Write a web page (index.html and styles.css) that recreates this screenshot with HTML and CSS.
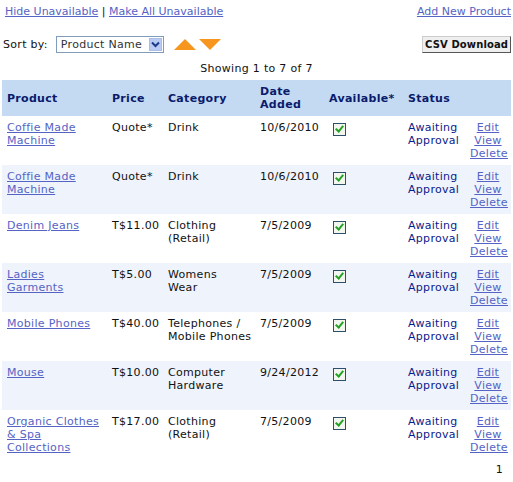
FILE: index.html
```html
<!DOCTYPE html>
<html>
<head>
<meta charset="utf-8">
<link rel="stylesheet" href="styles.css">
</head>
<body>
<div class="page">
  <div class="toplinks">
    <div><a href="#">Hide Unavailable</a> | <a href="#">Make All Unavailable</a></div>
    <a href="#">Add New Product</a>
  </div>
  <div class="sortbar">
    <div class="sortleft">
      <span class="sortlabel">Sort by:</span>
      <span class="selectwrap">
        <select class="sortselect"><option>Product Name</option></select>
        <span class="selbtn"><svg width="9" height="7" viewBox="0 0 9 7"><path d="M1 1.5 L4.5 5 L8 1.5" fill="none" stroke="#1d3a8a" stroke-width="2"/></svg></span>
      </span>
      <svg class="arrow" width="22" height="11" viewBox="0 0 22 11"><polygon points="0,11 11,0 22,11" fill="#f7961f"/></svg>
      <svg class="arrow" width="22" height="11" viewBox="0 0 22 11"><polygon points="0,0 22,0 11,11" fill="#f7961f"/></svg>
    </div>
    <button class="csv">CSV Download</button>
  </div>
  <div class="showing">Showing 1 to 7 of 7</div>
  <table class="grid">
    <colgroup>
      <col class="c-prod"><col class="c-price"><col class="c-cat"><col class="c-date"><col class="c-avail"><col class="c-status"><col>
    </colgroup>
    <thead>
      <tr><th>Product</th><th>Price</th><th>Category</th><th>Date<br>Added</th><th>Available*</th><th>Status</th><th></th></tr>
    </thead>
    <tbody>
      <tr><td><a href="#">Coffie Made Machine</a></td><td>Quote*</td><td class="cat">Drink</td><td>10/6/2010</td><td><span class="chk"></span></td><td class="status">Awaiting Approval</td><td class="acts"><a href="#">Edit</a><br><a href="#">View</a><br><a href="#">Delete</a></td></tr>
      <tr class="alt"><td><a href="#">Coffie Made Machine</a></td><td>Quote*</td><td class="cat">Drink</td><td>10/6/2010</td><td><span class="chk"></span></td><td class="status">Awaiting Approval</td><td class="acts"><a href="#">Edit</a><br><a href="#">View</a><br><a href="#">Delete</a></td></tr>
      <tr><td><a href="#">Denim Jeans</a></td><td>T$11.00</td><td class="cat">Clothing (Retail)</td><td>7/5/2009</td><td><span class="chk"></span></td><td class="status">Awaiting Approval</td><td class="acts"><a href="#">Edit</a><br><a href="#">View</a><br><a href="#">Delete</a></td></tr>
      <tr class="alt"><td><a href="#">Ladies Garments</a></td><td>T$5.00</td><td class="cat">Womens<br>Wear</td><td>7/5/2009</td><td><span class="chk"></span></td><td class="status">Awaiting Approval</td><td class="acts"><a href="#">Edit</a><br><a href="#">View</a><br><a href="#">Delete</a></td></tr>
      <tr><td><a href="#">Mobile Phones</a></td><td>T$40.00</td><td class="cat">Telephones / Mobile Phones</td><td>7/5/2009</td><td><span class="chk"></span></td><td class="status">Awaiting Approval</td><td class="acts"><a href="#">Edit</a><br><a href="#">View</a><br><a href="#">Delete</a></td></tr>
      <tr class="alt"><td><a href="#">Mouse</a></td><td>T$10.00</td><td class="cat">Computer Hardware</td><td>9/24/2012</td><td><span class="chk"></span></td><td class="status">Awaiting Approval</td><td class="acts"><a href="#">Edit</a><br><a href="#">View</a><br><a href="#">Delete</a></td></tr>
      <tr><td><a href="#">Organic Clothes &amp; Spa Collections</a></td><td>T$17.00</td><td class="cat">Clothing (Retail)</td><td>7/5/2009</td><td><span class="chk"></span></td><td class="status">Awaiting Approval</td><td class="acts"><a href="#">Edit</a><br><a href="#">View</a><br><a href="#">Delete</a></td></tr>
    </tbody>
  </table>
  <div class="pager">1</div>
</div>
</body>
</html>
```
FILE: styles.css
```css
html, body { margin: 0; padding: 0; background: #fff; }
body { font-family: "DejaVu Sans", Verdana, sans-serif; font-size: 11px; color: #111; line-height: 13px; letter-spacing: 0.3px; }
a { color: #5563c4; text-decoration: underline; }
.page { padding: 5px 2px 0 2px; }
.toplinks { display: flex; justify-content: space-between; padding: 0 0 0 3px; height: 14px; letter-spacing: 0; }
.sortbar { display: flex; justify-content: space-between; align-items: center; margin-top: 17px; padding-left: 1px; }
.sortleft { display: flex; align-items: center; }
.sortlabel { margin-right: 8px; }
.selectwrap { position: relative; display: inline-block; margin-right: 10px; }
.sortselect { appearance: none; -webkit-appearance: none; font-family: inherit; font-size: 11px; letter-spacing: 0.3px; color: #333; border: 1px solid #7f9db9; background: #fff; width: 108px; height: 17px; padding: 0 0 0 4px; margin: 0; border-radius: 0; line-height: 15px; }
.selbtn { position: absolute; top: 2px; right: 2px; width: 13px; height: 13px; background: #b9cbf3; border: 1px solid #a9bde8; box-sizing: border-box; display: flex; align-items: center; justify-content: center; }
.arrow { margin-right: 3px; }
.csv { font-family: inherit; font-size: 10px; font-weight: bold; letter-spacing: 0.1px; background: #efefef; border: 1px solid #555; border-color: #ccc #555 #555 #ccc; padding: 0 2px; height: 17px; color: #111; border-radius: 0; }
.showing { text-align: center; margin-top: 9px; height: 14px; }
.grid { width: 509px; border-collapse: collapse; table-layout: fixed; margin-top: 4px; }
.c-prod { width: 105px; } .c-price { width: 56px; } .c-cat { width: 92px; } .c-date { width: 69px; } .c-avail { width: 79px; } .c-status { width: 62px; }
.grid th { background: #c3daf2; color: #0b1a6b; text-align: left; padding: 5px 5px; height: 26px; vertical-align: middle; font-weight: bold; }
.grid td { padding: 5px 5px; vertical-align: top; height: 39px; }
.grid td.cat { padding-right: 3px; }
.grid tr.alt td { background: #eef3fc; }
.status { color: #0b1a8a; }
.acts { text-align: center; }
.chk { display: inline-block; width: 11px; height: 11px; border: 1px solid #2c4f6a; background: #f3f6ee; position: relative; margin: 2px 0 0 4px; }
.chk::after { content: ""; position: absolute; left: 3px; top: 0px; width: 3px; height: 6px; border: solid #23a223; border-width: 0 2px 2px 0; transform: rotate(40deg); }
.pager { text-align: right; padding-right: 8px; margin-top: 4px; }
```
